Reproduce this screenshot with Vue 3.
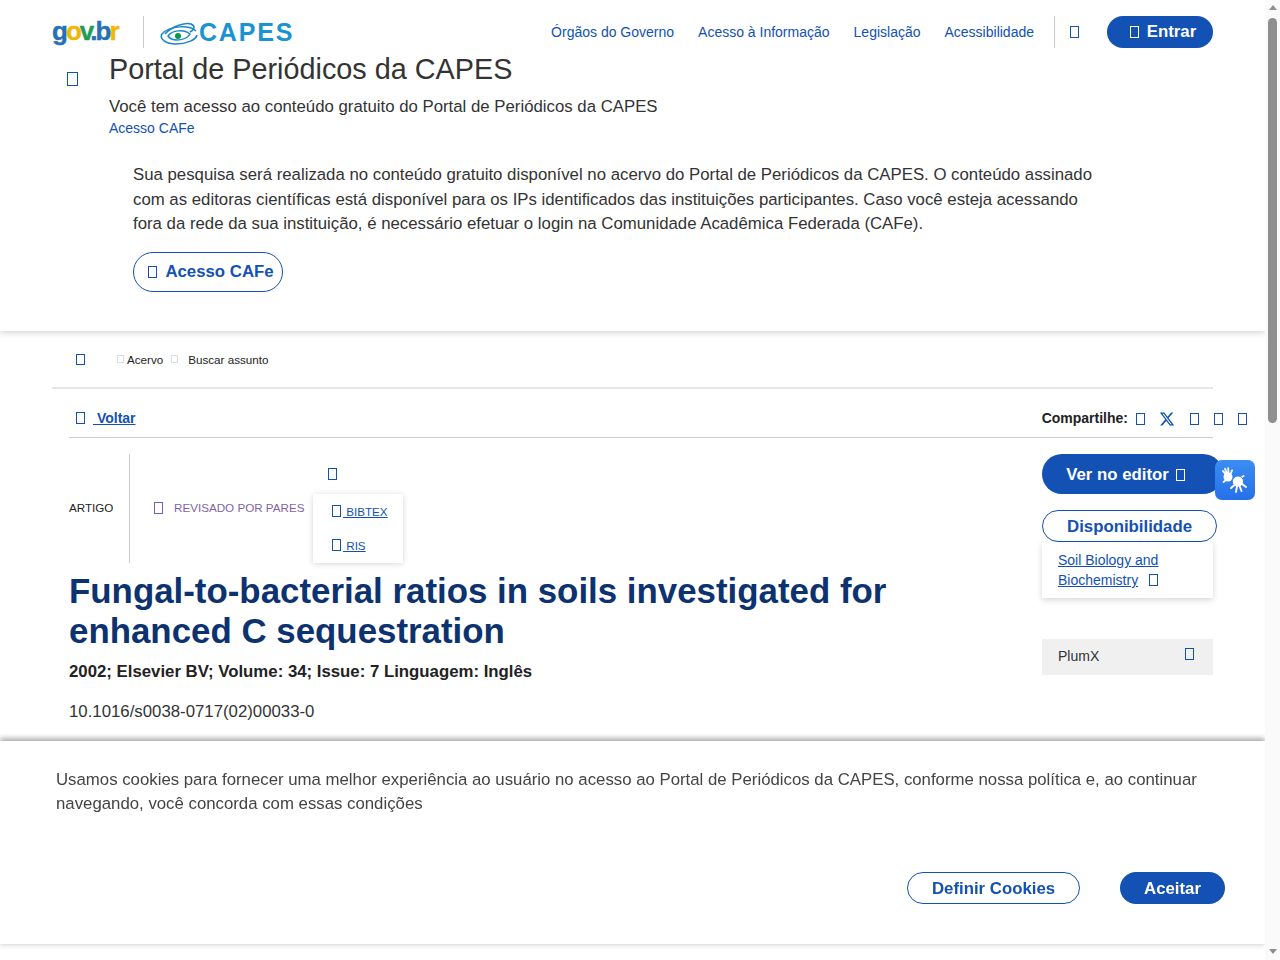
<script setup>
const shareIcons = ['a', 'x', 'b', 'c', 'd']
const navLinks = ['Órgãos do Governo', 'Acesso à Informação', 'Legislação', 'Acessibilidade']
</script>

<template>
  <div class="page">
    <header class="top">
      <div class="brand">
        <span class="gov"><span class="g">g</span><span class="r">o</span><span class="v">v</span><span class="g">.b</span><span class="r">r</span></span>
        <span class="brand-sep"></span>
        <svg class="eye" width="38" height="24" viewBox="0 0 38 24" fill="none" stroke="#1a86c8" stroke-width="1.5">
          <path d="M36 9C30 3 10 3 2 12C-1 17 6 22 16 22C26 22 36 18 37 13" />
          <path d="M5 12C12 4 26 0 31 2C36 4 34 8 30 10" />
          <path d="M8 14C12 8 24 7 30 12C26 19 12 20 8 14Z" />
          <circle cx="18" cy="14" r="3" fill="#0b9444" stroke="none" />
        </svg>
        <span class="capes">CAPES</span>
      </div>
      <nav class="nav">
        <a v-for="link in navLinks" :key="link" class="nav-link">{{ link }}</a>
        <span class="nav-sep"></span>
        <i class="tofu nav-icon"></i>
        <button class="btn solid entrar"><i class="tofu white"></i>Entrar</button>
      </nav>
    </header>

    <section class="portal">
      <div class="portal-head">
        <i class="tofu portal-icon"></i>
        <div>
          <h1>Portal de Periódicos da CAPES</h1>
          <p class="lead">Você tem acesso ao conteúdo gratuito do Portal de Periódicos da CAPES</p>
          <a class="cafe-link">Acesso CAFe</a>
        </div>
      </div>
      <p class="notice">
        Sua pesquisa será realizada no conteúdo gratuito disponível no acervo do Portal de Periódicos da CAPES. O conteúdo assinado com as editoras científicas está disponível para os IPs identificados das instituições participantes. Caso você esteja acessando fora da rede da sua instituição, é necessário efetuar o login na Comunidade Acadêmica Federada (CAFe).
      </p>
      <button class="btn outline cafe-btn"><i class="tofu"></i>Acesso CAFe</button>
    </section>

    <main class="content">
      <div class="crumbs">
        <i class="tofu home"></i>
        <i class="tofu pale first"></i><span>Acervo</span>
        <i class="tofu pale second"></i><span>Buscar assunto</span>
      </div>

      <div class="inner">
        <div class="back-row">
          <a class="back"><i class="tofu"></i><u>&nbsp;Voltar</u></a>
          <div class="share">
            <strong>Compartilhe:</strong>
            <template v-for="icon in shareIcons" :key="icon">
              <svg v-if="icon === 'x'" class="x-icon" width="16" height="16" viewBox="0 0 512 512" fill="#1351b4">
                <path d="M389.2 48h70.6L305.6 224.2 487 464H345L233.7 318.6 106.5 464H35.8L200.7 275.5 26.8 48H172.4L272.9 180.9 389.2 48zM364.4 421.8h39.1L151.1 88h-42L364.4 421.8z" />
              </svg>
              <i v-else class="tofu"></i>
            </template>
          </div>
        </div>

        <div class="article">
          <div class="article-main">
            <div class="tags">
              <span class="type">ARTIGO</span>
              <span class="tag-sep"></span>
              <i class="tofu purple"></i>
              <span class="reviewed">REVISADO POR PARES</span>
              <div class="export">
                <i class="tofu export-icon"></i>
                <div class="export-menu">
                  <a><i class="tofu"></i><u>&nbsp;BIBTEX</u></a>
                  <a><i class="tofu"></i><u>&nbsp;RIS</u></a>
                </div>
              </div>
            </div>
            <h2>Fungal-to-bacterial ratios in soils investigated for enhanced C sequestration</h2>
            <p class="meta">2002; Elsevier BV; Volume: 34; Issue: 7 Linguagem: Inglês</p>
            <p class="doi">10.1016/s0038-0717(02)00033-0</p>
          </div>

          <aside class="side">
            <button class="btn solid editor">Ver no editor<i class="tofu white"></i></button>
            <button class="btn outline avail">Disponibilidade</button>
            <div class="avail-menu">
              <a><u>Soil Biology and Biochemistry</u></a><i class="tofu"></i>
            </div>
            <div class="plumx"><span>PlumX</span><i class="tofu"></i></div>
          </aside>
        </div>
      </div>
    </main>

    <!-- fixos por cima do conteudo -->
    <div class="vlibras">
      <svg width="40" height="40" viewBox="0 0 40 40" fill="#fff" stroke="#fff" stroke-width="1.9" stroke-linecap="round">
        <circle cx="13" cy="17" r="4.5" stroke="none" />
        <path d="M12 16L8 11M12.5 15L10 8.8M13.5 15L13.2 8.3M15 15.5L17 10.5M11 20L8.5 22" fill="none" />
        <path d="M24 19L28.5 16" fill="none" />
        <circle cx="23" cy="21.5" r="5.6" stroke="#2f7fec" stroke-width="1" />
        <path d="M20 24.5L16 28M22 26L21 32M24.5 26L26.5 31M27 24L31 27" fill="none" />
      </svg>
    </div>

    <div class="cookies">
      <p>Usamos cookies para fornecer uma melhor experiência ao usuário no acesso ao Portal de Periódicos da CAPES, conforme nossa política e, ao continuar navegando, você concorda com essas condições</p>
      <div class="cookie-actions">
        <button class="btn outline define">Definir Cookies</button>
        <button class="btn solid accept">Aceitar</button>
      </div>
    </div>

    <div class="scrollbar">
      <span class="arrow up"></span>
      <span class="thumb"></span>
      <span class="arrow down"></span>
    </div>
  </div>
</template>

<style>
html, body {
  margin: 0;
  height: 960px;
  overflow: hidden;
  background: #fff;
}
</style>

<style scoped>
.page {
  width: 1265px;
  font-family: "Liberation Sans", Arial, sans-serif;
  color: #333;
}

.tofu {
  display: inline-block;
  box-sizing: border-box;
  width: 9px;
  height: 12px;
  border: 1px solid #1351b4;
  flex: none;
}

.tofu.white {
  border-color: #fff;
}

.btn {
  font-family: inherit;
  font-weight: 700;
  border-radius: 100px;
  box-sizing: border-box;
  display: flex;
  align-items: center;
  justify-content: center;
  padding: 0;
}

.btn.solid {
  background: #1351b4;
  color: #fff;
  border: none;
}

.btn.outline {
  background: #fff;
  color: #1351b4;
  border: 1px solid #1351b4;
}

/* cabecalho */
.top {
  display: flex;
  justify-content: space-between;
  align-items: center;
  height: 32px;
  padding: 16px 52px 0;
}

.brand {
  display: flex;
  align-items: center;
}

.gov {
  font-size: 26px;
  font-weight: 700;
  letter-spacing: -2px;
  width: 68px;
  margin-top: -2px;
  -webkit-text-stroke: 0.4px currentColor;
}

.gov .g { color: #2670b8; }
.gov .v { color: #1f9d55; }
.gov .r { color: #f2b705; }

.brand-sep {
  width: 1px;
  height: 32px;
  background: #ccc;
  margin: 0 16px 0 23px;
}

.eye {
  margin-top: 3px;
}

.capes {
  color: #1a93d2;
  font-size: 25px;
  font-weight: 700;
  letter-spacing: 1.8px;
  margin-left: 1px;
}

.nav {
  display: flex;
  align-items: center;
}

.nav-link {
  color: #1351b4;
  font-size: 14px;
  margin-right: 24px;
}

.nav-link:nth-child(4) {
  margin-right: 20px;
}

.nav-sep {
  width: 1px;
  height: 32px;
  background: #ccc;
}

.nav-icon {
  margin: 0 28px 0 15px;
}

.entrar {
  width: 106px;
  height: 32px;
  font-size: 16.8px;
  gap: 8px;
  padding-left: 6px;
}

/* portal */
.portal {
  height: 277px;
  padding: 6px 0 0 0;
  box-shadow: 0 2px 6px rgba(0, 0, 0, 0.16);
  clip-path: inset(0 0 -12px 0);
}

.portal-head {
  display: flex;
  padding-left: 67px;
}

.portal-icon {
  width: 11px;
  height: 14px;
  margin: 18px 31px 0 0;
}

h1 {
  margin: 0;
  font-size: 28.8px;
  font-weight: 400;
  line-height: 30px;
}

.lead {
  margin: 11px 0 0;
  font-size: 16.8px;
  line-height: 24px;
}

.cafe-link {
  display: block;
  color: #1351b4;
  font-size: 14px;
  line-height: 19px;
}

.notice {
  margin: 25px 0 0 133px;
  width: 970px;
  font-size: 16.8px;
  line-height: 24.5px;
}

.cafe-btn {
  width: 150px;
  height: 40px;
  margin: 15px 0 0 133px;
  font-size: 16.8px;
  gap: 8px;
  padding-left: 6px;
}

/* conteudo */
.content {
  padding: 0 52px;
}

.crumbs {
  display: flex;
  align-items: center;
  height: 56px;
  border-bottom: 2px solid #e6e6e6;
  font-size: 11.65px;
  color: #222;
}

.home {
  width: 9px;
  height: 11px;
  margin-left: 24px;
}

.pale {
  width: 7px;
  height: 8px;
  border-color: #d8dce4;
}

.first {
  margin: 0 3px 0 32px;
}

.second {
  margin: 0 10px 0 8px;
}

.inner {
  padding-left: 17px;
}

.back-row {
  display: flex;
  justify-content: space-between;
  align-items: center;
  height: 38px;
  padding-top: 10px;
  border-bottom: 1px solid #ccc;
}

.back {
  display: flex;
  align-items: center;
  color: #1351b4;
  font-size: 14px;
  font-weight: 700;
  padding-left: 7px;
  gap: 8px;
}

.share {
  display: flex;
  align-items: center;
  font-size: 14px;
  color: #222;
  margin-right: -32px;
}

.share strong {
  margin-right: 8px;
}

.share .tofu {
  margin: 2px 15px 0 0;
}

.share .tofu:last-child {
  margin-right: -2px;
}

.x-icon {
  margin: 2px 15px 0 -1px;
}

.article {
  display: flex;
  justify-content: space-between;
  padding-top: 16px;
}

.article-main {
  width: 880px;
}

.tags {
  display: flex;
  align-items: center;
  height: 109px;
  font-size: 11.65px;
}

.type {
  width: 60px;
  color: #222;
  margin-bottom: 2px;
}

.tag-sep {
  width: 1px;
  height: 109px;
  background: #ccc;
}

.purple {
  border-color: #7c5bb5;
  margin: 0 11px 2px 24px;
}

.reviewed {
  color: #7f63ad;
  width: 139px;
  margin-bottom: 2px;
}

.export {
  align-self: stretch;
  width: 90px;
  display: flex;
  flex-direction: column;
}

.export-icon {
  margin: 14px 0 14px 15px;
}

.export-menu {
  flex: 1;
  background: #fff;
  box-shadow: 0 1px 6px rgba(0, 0, 0, 0.16);
  font-size: 11.65px;
  display: flex;
  flex-direction: column;
  padding: 10px 0 0 19px;
  gap: 20px;
  color: #1351b4;
}

.export-menu a {
  display: flex;
  align-items: center;
  height: 14px;
}

.export-menu .tofu {
  margin-right: 2px;
}

h2 {
  margin: 8px 0 0;
  font-size: 34.87px;
  line-height: 40px;
  color: #0c326f;
}

.meta {
  margin: 9px 0 0;
  font-size: 16.8px;
  font-weight: 700;
  line-height: 24px;
  color: #222;
}

.doi {
  margin: 16px 0 0;
  font-size: 16.8px;
  line-height: 24px;
}

.side {
  width: 171px;
  display: flex;
  flex-direction: column;
}

.editor {
  width: 181px;
  height: 40px;
  font-size: 16.8px;
  gap: 7px;
  padding: 2px 14px 0 0;
  flex: none;
}

.avail {
  width: 175px;
  height: 32px;
  margin-top: 16px;
  font-size: 16.8px;
  padding-top: 2px;
  flex: none;
}

.avail-menu {
  background: #fff;
  box-shadow: 0 2px 6px rgba(0, 0, 0, 0.16);
  padding: 8px 16px;
  height: 40px;
  font-size: 14px;
  line-height: 20px;
  color: #1351b4;
}

.avail-menu .tofu {
  margin-left: 11px;
  vertical-align: -1px;
}

.plumx {
  display: flex;
  justify-content: space-between;
  align-items: center;
  height: 36px;
  margin-top: 41px;
  padding: 0 19px 0 16px;
  background: #f0f0f0;
  font-size: 14px;
}

.plumx span {
  margin-bottom: 3px;
}

.plumx .tofu {
  margin-bottom: 7px;
}

/* widget de libras */
.vlibras {
  position: fixed;
  left: 1215px;
  top: 460px;
  width: 40px;
  height: 40px;
  border-radius: 7px;
  background: linear-gradient(#3b8df2, #2670e8);
}

.vlibras svg {
  display: block;
}

/* aviso de cookies */
.cookies {
  position: fixed;
  left: 0;
  top: 741px;
  width: 1265px;
  height: 203px;
  box-sizing: border-box;
  padding: 27px 40px 0 56px;
  background: #fff;
  box-shadow: 0 -3px 5px rgba(0, 0, 0, 0.3), 0 2px 5px rgba(0, 0, 0, 0.12);
  display: flex;
  flex-direction: column;
}

.cookies p {
  margin: 0;
  font-size: 16.8px;
  line-height: 24px;
  color: #444;
}

.cookie-actions {
  display: flex;
  justify-content: flex-end;
  gap: 40px;
  margin-top: 56px;
}

.define {
  width: 173px;
  height: 32px;
  font-size: 16.8px;
  padding-top: 2px;
}

.accept {
  width: 105px;
  height: 32px;
  font-size: 16.8px;
  padding-top: 2px;
}

/* barra de rolagem */
.scrollbar {
  position: fixed;
  right: 0;
  top: 0;
  width: 15px;
  height: 960px;
  background: #fafafa;
  display: flex;
  flex-direction: column;
  align-items: center;
}

.arrow {
  width: 0;
  height: 0;
  border-left: 4px solid transparent;
  border-right: 4px solid transparent;
}

.arrow.up {
  border-bottom: 5px solid #8f8f8f;
  margin-top: 5px;
}

.arrow.down {
  border-top: 5px solid #8f8f8f;
  margin-top: auto;
  margin-bottom: 6px;
}

.thumb {
  width: 9px;
  height: 405px;
  margin-top: 8px;
  background: #8f8f8f;
  border-radius: 5px;
}
</style>
